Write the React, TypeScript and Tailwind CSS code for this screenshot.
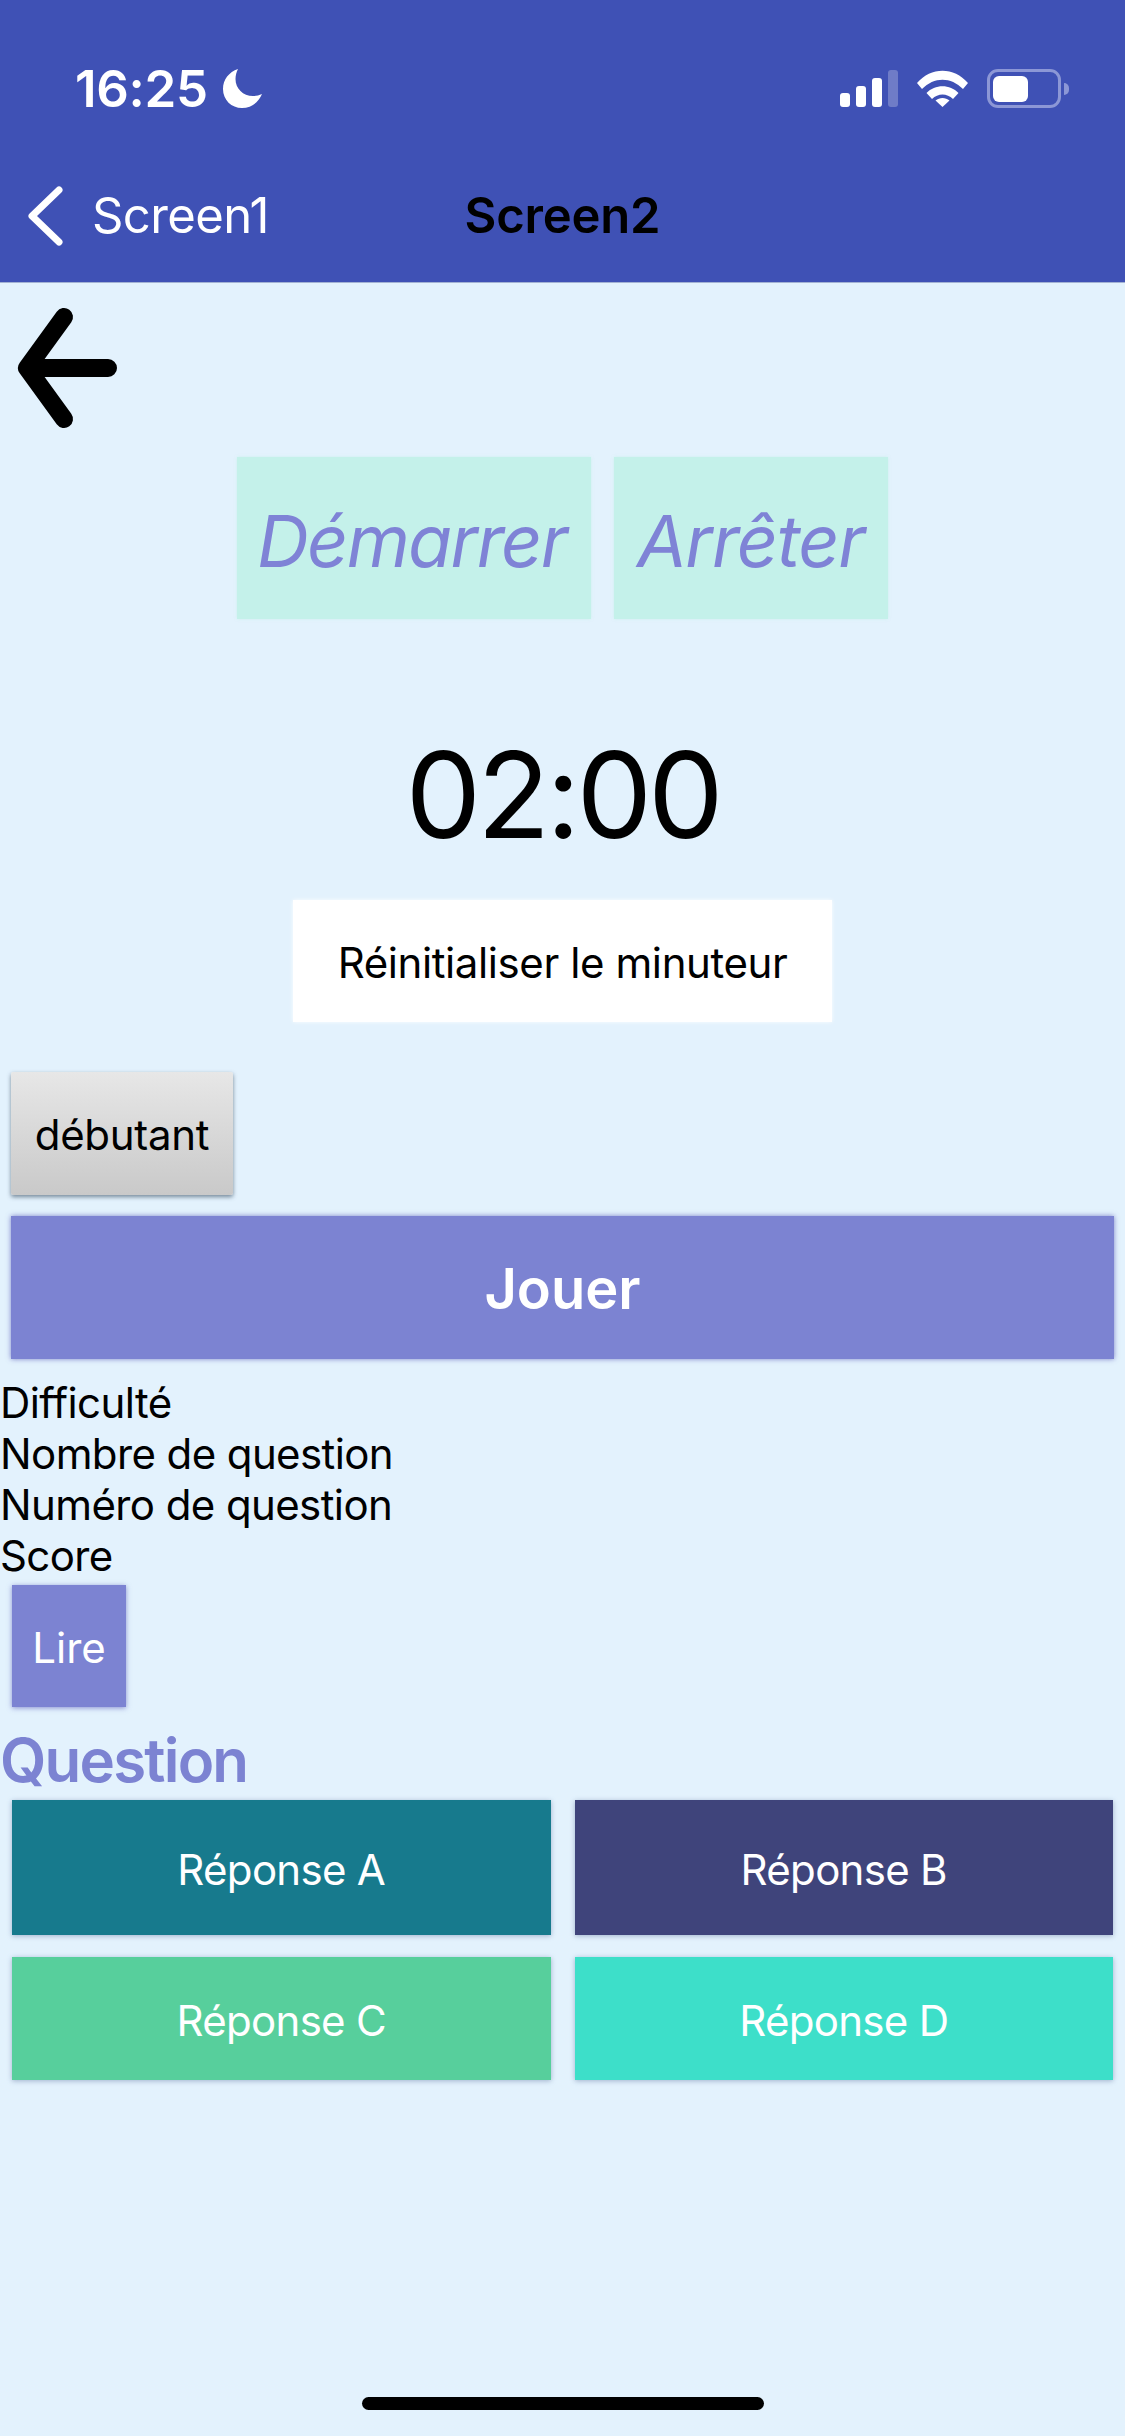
const font = { fontFamily: "Inter, 'Noto Sans', sans-serif" };

function StatusIcons() {
  return (
    <div className="flex items-center">
      <svg width="58" height="37" viewBox="0 0 58 37" className="mr-[19px]">
        <rect x="0" y="23" width="10" height="14" rx="3" fill="#fff" />
        <rect x="16" y="16" width="10" height="21" rx="3" fill="#fff" />
        <rect x="32" y="8" width="10" height="29" rx="3" fill="#fff" />
        <rect x="48" y="0" width="10" height="37" rx="3" fill="#fff" fillOpacity="0.25" />
      </svg>
      <svg width="51" height="37" viewBox="0 0 51 37" className="mr-[19px]">
        <path d="M0 13 C14 -3.5 37 -3.5 51 13 L46 19 C34 6.5 17 6.5 5 19 Z" fill="#fff" />
        <path d="M9.5 23 C18 14 33 14 41.5 23 L36 29 C30 23 21 23 15 29 Z" fill="#fff" />
        <path d="M18.5 30.500 C22.500 27 28.500 27 32.500 30.500 L25.500 37 Z" fill="#fff" />
      </svg>
      <div className="flex items-center">
        <div className="flex h-[39px] w-[74px] items-center rounded-[11px] border-[3px] border-[#8c97d6] p-[3px]">
          <div className="h-[26px] w-[35px] rounded-[6px] bg-white" />
        </div>
        <div className="ml-[3px] h-[12px] w-[5px] rounded-r-full bg-[#8c97d6]" />
      </div>
    </div>
  );
}

function Moon() {
  return (
    <svg width="39" height="39" viewBox="0 0 39 39" className="ml-[15px]">
      <path
        d="M15 0 C6 3 0 10.500 0 20 C0 31 8.500 39 19 39 C28 39 35.500 33.500 39 25 C36 26.500 33 27 30 27 C20 27 12.500 19.500 12.500 10 C12.500 6.500 13.500 3 15 0 Z"
        fill="#fff"
      />
    </svg>
  );
}

function AnswerButton({ label, color }: { label: string; color: string }) {
  return (
    <button
      type="button"
      className={`flex items-center justify-center pt-[3px] text-[42px] tracking-[-0.7px] text-white shadow-[0_1px_5px_rgba(60,80,130,0.4)] ${color}`}
    >
      {label}
    </button>
  );
}

export default function App() {
  return (
    <div className="relative h-[2436px] w-[1125px] overflow-hidden bg-[#e3f2fd] text-black" style={font}>
      <header className="h-[283px] border-b border-[#a3b2d3] bg-[#3f51b5]">
        <div className="flex items-center justify-between pl-[75px] pr-[56px] pt-[69px]">
          <div className="flex items-center">
            <span className="text-[51px] font-semibold leading-[39px] tracking-[-0.3px] text-white">16:25</span>
            <Moon />
          </div>
          <StatusIcons />
        </div>
        <div className="mt-[78px] grid grid-cols-[1fr_auto_1fr] items-center">
          <div className="flex items-center pl-[26px]">
            <svg width="38" height="60" viewBox="0 0 38 60">
              <path d="M33 4 L6 30 L33 56" fill="none" stroke="#fff" strokeWidth="7" strokeLinecap="round" strokeLinejoin="round" />
            </svg>
            <span className="ml-[28px] text-[49px] leading-[60px] tracking-[-0.6px] text-white">Screen1</span>
          </div>
          <span className="text-[49px] font-semibold leading-[60px] tracking-[-0.2px]">Screen2</span>
          <div />
        </div>
      </header>

      <main className="flex flex-col">
        <svg width="116" height="136" viewBox="0 0 116 136" className="ml-[10px] mt-[17px]">
          <path d="M54 17 L17 68 L54 119 M17 68 L98 68" fill="none" stroke="#000" strokeWidth="18" strokeLinecap="round" strokeLinejoin="round" />
        </svg>

        <div className="mt-[21px] flex justify-center gap-[23px]">
          <button
            type="button"
            className="h-[162px] w-[354px] bg-[#c4f1ea] pr-[5px] pt-[5px] text-[72px] italic tracking-[-1.8px] text-[#7f83d6] shadow-[0_0_3px_rgba(196,241,234,0.7)]"
          >
            Démarrer
          </button>
          <button
            type="button"
            className="h-[162px] w-[274px] bg-[#c4f1ea] pr-[1px] pt-[5px] text-[72px] italic tracking-[-1.4px] text-[#7f83d6] shadow-[0_0_3px_rgba(196,241,234,0.7)]"
          >
            Arrêter
          </button>
        </div>

        <div className="mt-[116px] text-center text-[120px] leading-[120px] tracking-[-4.2px]">02:00</div>

        <button
          type="button"
          className="mx-auto mt-[45px] h-[122px] w-[539px] bg-white pt-[2px] text-[42px] tracking-[-0.4px] shadow-[0_0_4px_rgba(255,255,255,0.9)]"
        >
          Réinitialiser le minuteur
        </button>

        <button
          type="button"
          className="ml-[11px] mt-[50px] h-[123px] w-[222px] rounded-[2px] bg-gradient-to-b from-[#e7e7e7] to-[#c9c9c9] pt-[2px] text-[42px] tracking-[-0.3px] shadow-[0_2px_4px_rgba(70,90,110,0.7)]"
        >
          débutant
        </button>

        <button
          type="button"
          className="mx-[11px] mt-[21px] h-[143px] bg-[#7c83d2] pt-[3px] text-[56px] font-semibold text-white shadow-[0_0_5px_rgba(80,80,180,0.7)]"
        >
          Jouer
        </button>

        <div className="mt-[18px] text-[42px] leading-[51px] tracking-[-0.6px]">
          <p>Difficulté</p>
          <p>Nombre de question</p>
          <p>Numéro de question</p>
          <p>Score</p>
        </div>

        <button
          type="button"
          className="ml-[12px] mt-[4px] h-[122px] w-[114px] bg-[#7c83d2] pt-[2px] text-[42px] text-white shadow-[0_1px_5px_rgba(80,80,180,0.6)]"
        >
          Lire
        </button>

        <h2 className="mt-[19px] text-[60px] font-semibold leading-[68px] tracking-[-1.8px] text-[#7c83d2]">Question</h2>

        <div className="mt-[6px] grid grid-cols-2 grid-rows-[135px_123px] gap-x-[24px] gap-y-[22px] px-[12px]">
          <AnswerButton label="Réponse A" color="bg-[#177a8d]" />
          <AnswerButton label="Réponse B" color="bg-[#3f447b]" />
          <AnswerButton label="Réponse C" color="bg-[#57cf9c]" />
          <AnswerButton label="Réponse D" color="bg-[#3ddfc9]" />
        </div>
      </main>

      <div className="absolute bottom-[26px] left-[362px] h-[13px] w-[402px] rounded-full bg-black" />
    </div>
  );
}
